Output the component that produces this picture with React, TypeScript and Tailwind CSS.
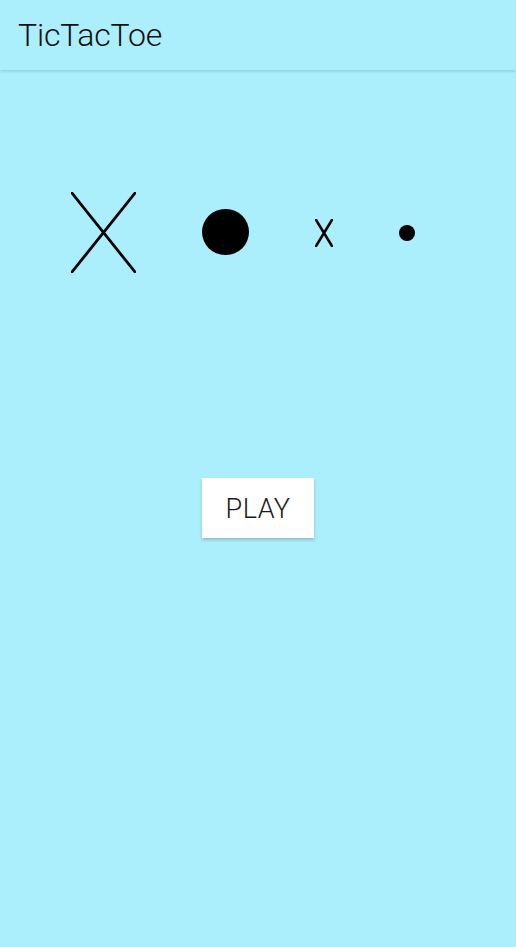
export default function App() {
  return (
    <div className="min-h-[947px] bg-[#abeefc] font-['Roboto','Liberation_Sans',sans-serif]">
      <header className="flex h-[70px] items-center bg-[#abeefc] px-[18px] shadow-[0_1px_3px_rgba(0,0,0,0.18)]">
        <h1 className="text-[32px] font-light leading-none text-[#111] tracking-[-0.2px]">TicTacToe</h1>
      </header>

      <div className="mt-[122px] flex items-center gap-[66px] pl-[71px]">
        <svg width="65" height="81" viewBox="0 0 65 81">
          <path d="M1 1 L64 80 M64 1 L1 80" stroke="black" strokeWidth="2.8" strokeLinecap="round" />
        </svg>
        <div className="mb-[2px] h-[46px] w-[47px] rounded-full bg-black" />
        <svg width="18" height="28" viewBox="0 0 18 28">
          <path d="M1 1 L17 27 M17 1 L1 27" stroke="black" strokeWidth="2.6" strokeLinecap="round" />
        </svg>
        <div className="h-4 w-4 rounded-full bg-black" />
      </div>

      <div className="mt-[205px] flex justify-center">
        <button className="h-[60px] w-[112px] bg-white pt-[3px] text-[27px] font-light tracking-[0.5px] text-[#1a1a1a] shadow-[0_2px_3px_rgba(0,0,0,0.2)]">
          PLAY
        </button>
      </div>
    </div>
  );
}
